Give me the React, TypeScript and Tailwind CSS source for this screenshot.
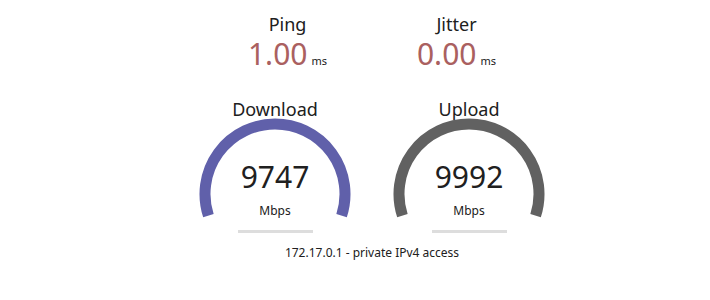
import React from 'react';

// speed test result panel (ping / jitter / gauges)
const arcPath = 'M 13.42 97.63 A 70 70 0 1 1 146.58 97.63';

function Stat({ label, value }: { label: string; value: string }) {
  return (
    <div className="w-[169px] flex flex-col items-center">
      <div className="text-[18px] leading-[22px] text-[#202020]">{label}</div>
      <div className="mt-[4px] flex items-baseline leading-none">
        <span className="text-[30px] leading-[30px] text-[#aa6060]">{value}</span>
        <span className="ml-[4px] text-[11px] leading-none text-[#202020]">ms</span>
      </div>
    </div>
  );
}

function Gauge({ label, value, color }: { label: string; value: string; color: string }) {
  return (
    <div className="w-[194px] flex flex-col items-center">
      <div className="text-[18px] leading-[22px] text-[#202020]">{label}</div>
      <div className="relative w-[160px] flex flex-col items-center">
        <svg className="absolute -top-[2px] left-0" width="160" height="110" viewBox="0 0 160 110">
          <path d={arcPath} fill="none" stroke={color} strokeWidth="11" />
        </svg>
        <div className="relative mt-[42px] text-[30px] leading-[30px] text-[#202020]">{value}</div>
        <div className="relative mt-[13px] text-[12px] leading-[12px] text-[#202020]">Mbps</div>
        <div className="relative mt-[13px] w-[75px] h-[3px] bg-[#dddddd]" />
      </div>
    </div>
  );
}

export default function App() {
  return (
    <div
      className="w-full h-[300px] bg-white pl-[34px] pt-[13px] flex flex-col items-center"
      style={{ fontFamily: '"Noto Sans", "Open Sans", sans-serif' }}
    >
      <div className="flex">
        <Stat label="Ping" value="1.00" />
        <Stat label="Jitter" value="0.00" />
      </div>
      <div className="mt-[29px] flex">
        <Gauge label="Download" value="9747" color="#6060aa" />
        <Gauge label="Upload" value="9992" color="#616161" />
      </div>
      <div className="mt-[14px] text-[12px] leading-[12px] text-[#202020]">172.17.0.1 - private IPv4 access</div>
    </div>
  );
}
